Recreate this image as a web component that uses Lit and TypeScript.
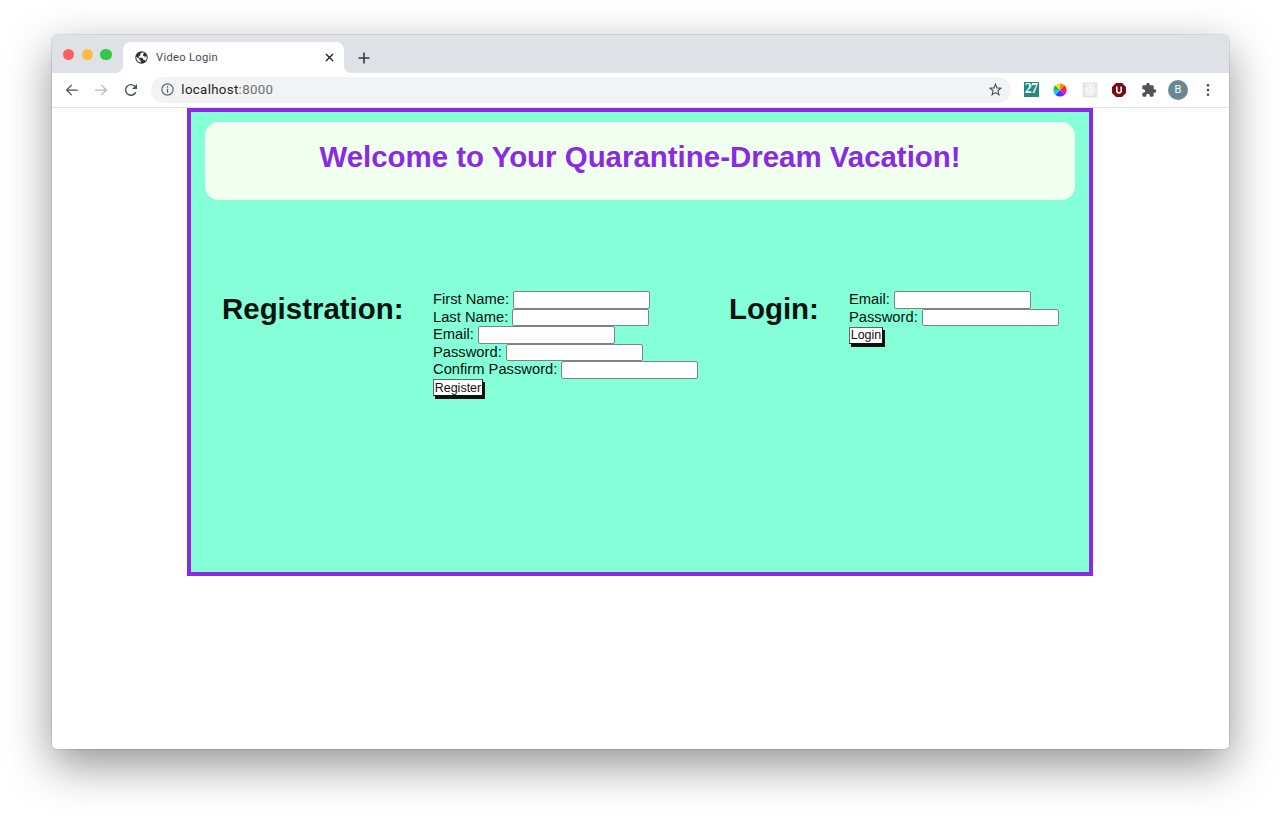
import { LitElement, html, css, svg } from "lit";
import { customElement } from "lit/decorators.js";

@customElement("browser-chrome")
class BrowserChrome extends LitElement {
  static styles = css`
    :host { display: block; }
    svg { display: block; flex: none; }
    .tabs { height: 38px; background: #dee1e6; display: flex; box-sizing: border-box; padding: 7px 0 0 11.5px; }
    .lights { display: flex; gap: 7.2px; padding-top: 7px; width: 60px; }
    .light { width: 11.4px; height: 11.4px; border-radius: 50%; }
    .red { background: #fc605c; }
    .yellow { background: #fdbc40; }
    .green { background: #34c84a; }
    .tab { position: relative; box-sizing: border-box; width: 221px; height: 31px; background: #fff; border-radius: 8px 8px 0 0; display: flex; align-items: center; padding: 0 10.5px 0 12px; }
    .tab::before, .tab::after { content: ""; position: absolute; bottom: 0; width: 7px; height: 7px; }
    .tab::before { left: -7px; background: radial-gradient(circle at 0 0, transparent 6.6px, #fff 7.2px); }
    .tab::after { right: -7px; background: radial-gradient(circle at 100% 0, transparent 6.6px, #fff 7.2px); }
    .title { flex: 1; margin-left: 8px; font: 11.2px/16px Roboto, sans-serif; letter-spacing: 0.28px; color: #45494d; }
    .plus { margin: 9.5px 0 0 14px; }
    .bar { height: 33.5px; background: #fff; border-bottom: 1px solid #e2e3e5; display: flex; align-items: center; padding: 0 13px 0 13px; }
    .nav { display: flex; gap: 15.5px; width: 87px; }
    .address { width: 861px; height: 26px; border-radius: 13px; background: #f1f3f4; display: flex; align-items: center; box-sizing: border-box; padding: 0 9.5px 0 10px; }
    .url { flex: 1; margin: 1px 0 0 7px; font: 13.3px/18px Roboto, sans-serif; letter-spacing: 0.32px; color: #1d1f21; }
    .port { color: #6a6e73; }
    .tools { margin-left: 12.5px; display: flex; align-items: center; gap: 13.5px; }
    .badge { width: 15px; height: 15px; background: #248a80; color: #fff; font: bold 14px/13px "Liberation Serif", serif; text-align: center; letter-spacing: -0.8px; }
    .avatar { width: 20px; height: 20px; margin: 0 -2px; border-radius: 50%; background: #6c8794; color: #fff; font: 11px/20px Roboto, sans-serif; text-align: center; }
  `;

  wheel() {
    const colors = ["#ff8a00", "#ff2d20", "#f410c8", "#7a22f0", "#174bff", "#20c9f0", "#15c437", "#efe02a"];
    return svg`${colors.map((c, i) => svg`<path fill=${c} d="M8 8V1.4A6.6 6.6 0 0 1 12.67 3.33Z" transform="rotate(${i * 45} 8 8)"/>`)}`;
  }

  render() {
    return html`
      <div class="tabs">
        <div class="lights"><div class="light red"></div><div class="light yellow"></div><div class="light green"></div></div>
        <div class="tab">
          <svg width="13" height="13" viewBox="0 0 13 13"><circle cx="6.5" cy="6.5" r="6.2" fill="#303438"/><path fill="#fff" d="M6.8 1.5 5.3 3v1.4L3.8 5.5v1.2h3.5l1 1.3v1.1h1.4l.8.9a5.2 5.2 0 0 0 1-4.7L9.6 5.8 8.1 4.4V3.1L9.3 2A5 5 0 0 0 6.8 1.5ZM1.4 5.8a5 5 0 0 0 4.4 5.8V9.9L4.5 9V7.9Z"/></svg>
          <div class="title">Video Login</div>
          <svg width="9" height="9" viewBox="0 0 9 9"><path d="M1 1l7 7M8 1l-7 7" stroke="#222" stroke-width="1.4"/></svg>
        </div>
        <svg class="plus" width="12" height="12" viewBox="0 0 12 12"><path d="M6 .5v11M.5 6h11" stroke="#34373b" stroke-width="1.6"/></svg>
      </div>
      <div class="bar">
        <div class="nav">
          <svg width="14" height="14" viewBox="0 0 14 14" fill="none" stroke="#4c5054" stroke-width="1.25"><path d="M12.8 7H1.9M6.7 1.9 1.6 7l5.1 5.1"/></svg>
          <svg width="14" height="14" viewBox="0 0 14 14" fill="none" stroke="#b5b7ba" stroke-width="1.25"><path d="M1.2 7h10.900M7.300 1.900 12.400 7l-5.100 5.100"/></svg>
          <svg width="14" height="14" viewBox="0 0 14 14" fill="none" stroke="#4c5054" stroke-width="1.4"><path d="M11.800 9.100A5.300 5.300 0 1 1 11.200 3.700L12.400 5"/><path d="M13 1v5H8Z" fill="#4c5054" stroke="none"/></svg>
        </div>
        <div class="address">
          <svg width="13" height="13" viewBox="0 0 13 13"><circle cx="6.5" cy="6.5" r="5.6" fill="none" stroke="#5f6368" stroke-width="1.2"/><path d="M6.5 5.8v3.900M6.500 3.300v1.400" stroke="#5f6368" stroke-width="1.300"/></svg>
          <div class="url">localhost<span class="port">:8000</span></div>
          <svg width="13" height="13" viewBox="0 0 14 14"><path d="M7 1.300 8.600 5.300 12.900 5.600 9.600 8.400 10.700 12.600 7 10.300 3.300 12.600 4.400 8.400 1.100 5.600 5.400 5.300Z" fill="none" stroke="#4c5054" stroke-width="1.200"/></svg>
        </div>
        <div class="tools">
          <div class="badge">27</div>
          <svg width="16" height="16" viewBox="0 0 16 16">${this.wheel()}</svg>
          <svg width="16" height="16" viewBox="0 0 16 16"><path fill="#e4e4e4" d="M.5.5h15v15H.5z"/><g fill="none" stroke="#fafafa"><ellipse cx="8" cy="8" rx="6.2" ry="2.4"/><ellipse cx="8" cy="8" rx="6.2" ry="2.4" transform="rotate(60 8 8)"/><ellipse cx="8" cy="8" rx="6.2" ry="2.4" transform="rotate(120 8 8)"/></g><circle cx="8" cy="8" r="1.2" fill="#fafafa"/></svg>
          <svg width="16" height="16" viewBox="0 0 16 16"><path fill="#7b0c12" d="M5 1h6l4 4v6l-4 4H5l-4-4V5Z"/><path d="M5.8 4.6v4.2a2.2 2.2 0 0 0 4.4 0V4.6" fill="none" stroke="#fff" stroke-width="1.6"/></svg>
          <svg width="16" height="16" viewBox="0 0 24 24"><path fill="#505357" d="M20.5 11H19V7c0-1.1-.9-2-2-2h-4V3.5a2.5 2.5 0 0 0-5 0V5H4c-1.1 0-2 .9-2 2v3.8h1.5a2.7 2.7 0 0 1 0 5.4H2V20c0 1.100.9 2 2 2h3.800v-1.500a2.700 2.700 0 0 1 5.400 0V22H17c1.100 0 2-.9 2-2v-4h1.500a2.500 2.500 0 0 0 0-5Z"/></svg>
          <div class="avatar">B</div>
          <svg width="16" height="16" viewBox="0 0 16 16" fill="#414549"><circle cx="8" cy="3.300" r="1.250"/><circle cx="8" cy="8" r="1.250"/><circle cx="8" cy="12.700" r="1.250"/></svg>
        </div>
      </div>
    `;
  }
}

@customElement("account-form")
class AccountForm extends LitElement {
  static properties = { fields: { attribute: false }, action: {} };
  declare fields: string[];
  declare action: string;

  static styles = css`
    :host { display: block; font-family: "Liberation Sans", Arial, sans-serif; }
    .row { display: flex; align-items: center; height: 17.5px; gap: 4px; font-size: 14.72px; line-height: 17.5px; color: #06120d; white-space: nowrap; }
    .field { box-sizing: border-box; width: 137px; height: 17.5px; margin: 0; padding: 0 2px; background: #fff; border: 1px solid #7b8581; border-radius: 2px; }
    .submit { display: block; box-sizing: border-box; margin: 0.5px 0 0; height: 17px; padding: 0 0.7px; border: 1.5px solid; border-color: #666 #111 #111 #666; border-radius: 0; background: #fff; color: #111; font: 12.5px/14px "Liberation Sans", Arial, sans-serif; box-shadow: 2px 3px 0 #06120d; }
  `;

  render() {
    return html`
      ${this.fields.map((f) => html`<label class="row"><span>${f}:</span><input class="field" type=${f.includes("Password") ? "password" : "text"}></label>`)}
      <button class="submit">${this.action}</button>
    `;
  }
}

@customElement("app-root")
class AppRoot extends LitElement {
  static styles = css`
    :host { display: block; box-sizing: border-box; height: 817px; padding: 35px 51.5px 0; background: #fff; overflow: hidden; }
    .window { height: 714px; overflow: hidden; border-radius: 5px; background: #fff; }
    .shadow { border-radius: 5px; box-shadow: 0 0 0 0.8px rgba(0, 0, 0, 0.12), 0 16px 46px rgba(0, 0, 0, 0.43); }
    .page { box-sizing: border-box; width: 906px; height: 468px; margin: 0.5px auto 0; border: 4px solid #8a2be2; background: #85ffd7; padding: 9.5px 14px 0; font-family: "Liberation Sans", Arial, sans-serif; }
    .banner { height: 78px; box-sizing: border-box; padding-top: 18px; border-radius: 14px; background: #f0fff0; text-align: center; }
    h1, h2 { margin: 0; font-size: 29.44px; line-height: 34px; font-weight: bold; white-space: nowrap; }
    h1 { color: #8a2be2; }
    h2 { color: #06120d; padding-top: 1px; }
    .forms { display: grid; grid-template-columns: 211px 296px 120px 210px; margin: 91.5px 0 0 17px; }
  `;

  render() {
    return html`
      <div class="shadow"><div class="window">
        <browser-chrome></browser-chrome>
        <main class="page">
          <div class="banner"><h1>Welcome to Your Quarantine-Dream Vacation!</h1></div>
          <div class="forms">
            <h2>Registration:</h2>
            <account-form .fields=${["First Name", "Last Name", "Email", "Password", "Confirm Password"]} action="Register"></account-form>
            <h2>Login:</h2>
            <account-form .fields=${["Email", "Password"]} action="Login"></account-form>
          </div>
        </main>
      </div></div>
    `;
  }
}
